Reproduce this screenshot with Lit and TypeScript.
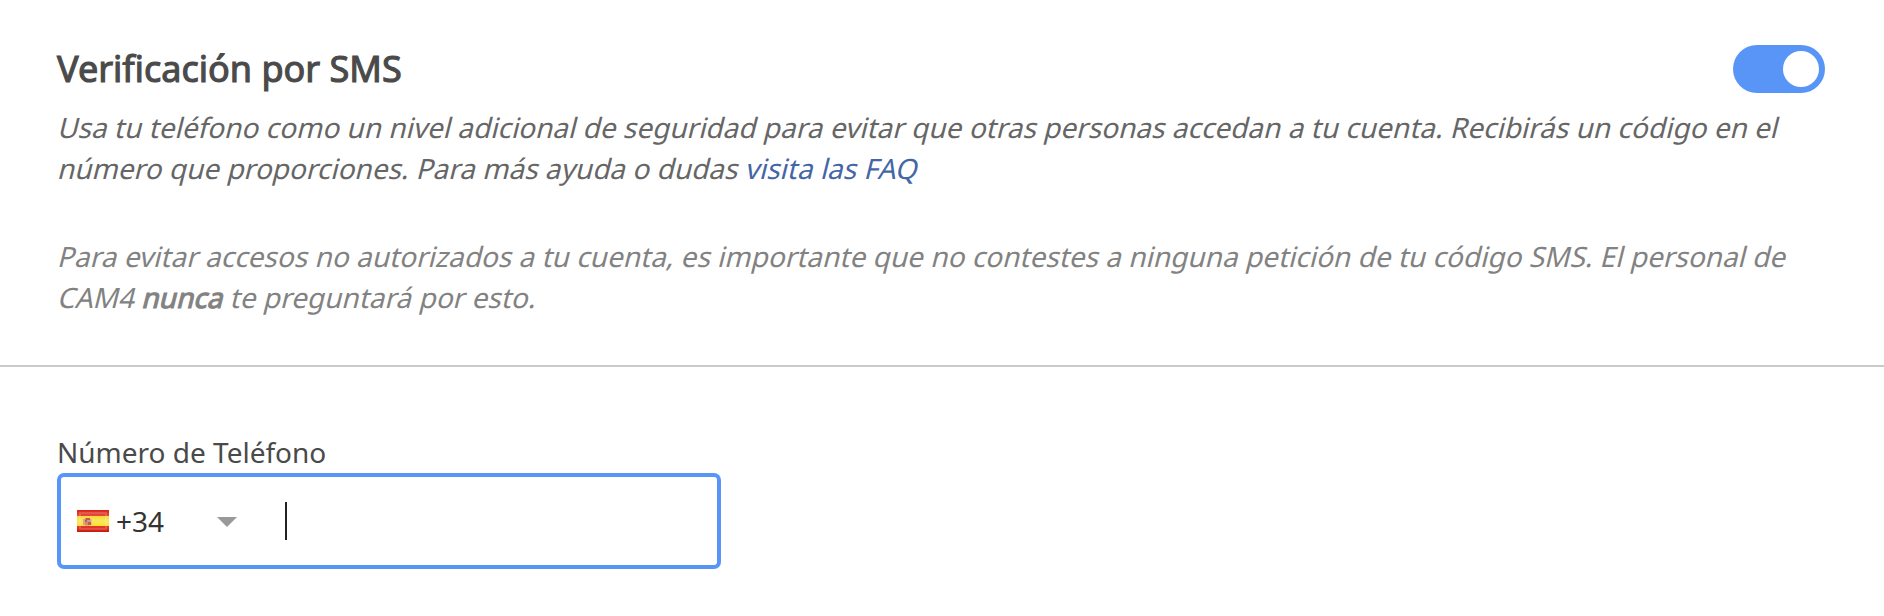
import { LitElement, html, css } from "lit";
import { customElement } from "lit/decorators.js";

@customElement("app-root")
export class AppRoot extends LitElement {
  static styles = css`
    :host { display: block; width: 1884px; height: 616px; background: #fff; overflow: hidden; font-family: "Noto Sans", sans-serif; color: #4a4a4a; }
    * { box-sizing: border-box; }
    .intro { height: 367px; padding: 45px 59px 0 57px; border-bottom: 2px solid #cacaca; }
    .head { display: flex; justify-content: space-between; height: 48px; }
    h1 { margin: -1px 0 0; font-size: 36px; line-height: 49px; font-weight: 400; -webkit-text-stroke: 1.1px #4a4a4a; white-space: nowrap; }
    .toggle { width: 92px; height: 48px; border-radius: 24px; background: #5995f7; display: flex; justify-content: flex-end; align-items: center; padding-right: 6px; }
    .knob { width: 36px; height: 36px; border-radius: 50%; background: #fff; }
    p { margin: 0; font-size: 28px; line-height: 41px; white-space: nowrap; color: #666; }
    .lead { margin-top: 14px; }
    .note { margin-top: 47px; color: #828282; }
    .line { display: block; width: max-content; transform: skewX(-14deg); transform-origin: 0 30px; }
    .faq { color: #4466a6; }
    .strong { -webkit-text-stroke: 1.1px #828282; }
    .form { padding: 65px 57px 0; }
    .label { font-size: 28px; line-height: 40px; margin-bottom: 1px; }
    .field { width: 664px; height: 96px; border: 4px solid #5995f7; border-radius: 7px; display: flex; align-items: center; padding-left: 16px; }
    .flag { width: 32px; height: 22px; margin-right: 7px; }
    .code { font-size: 28px; width: 101px; color: #333; }
    .arrow { width: 20px; height: 10px; margin-top: 2px; }
    .caret { width: 2px; height: 38px; background: #222; margin-left: 48px; }
  `;
  render() {
    return html`
      <section class="intro">
        <div class="head"><h1>Verificación por SMS</h1><div class="toggle"><div class="knob"></div></div></div>
        <p class="lead"><span class="line">Usa tu teléfono como un nivel adicional de seguridad para evitar que otras personas accedan a tu cuenta. Recibirás un código en el</span><span class="line">número que proporciones. Para más ayuda o dudas <span class="faq">visita las FAQ</span></span></p>
        <p class="note"><span class="line">Para evitar accesos no autorizados a tu cuenta, es importante que no contestes a ninguna petición de tu código SMS. El personal de</span><span class="line">CAM4 <span class="strong">nunca</span> te preguntará por esto.</span></p>
      </section>
      <section class="form">
        <div class="label">Número de Teléfono</div>
        <div class="field">
          <svg class="flag" viewBox="0 0 32 22">
            <defs>
              <linearGradient id="r" x2="0" y2="1"><stop stop-color="#d92419"/><stop offset=".25" stop-color="#e5493c"/><stop offset=".8" stop-color="#df3527"/><stop offset="1" stop-color="#c9180e"/></linearGradient>
              <linearGradient id="y" x2="0" y2="1"><stop stop-color="#fbd637"/><stop offset=".5" stop-color="#fae75c"/><stop offset="1" stop-color="#f8e22f"/></linearGradient>
            </defs>
            <path fill="url(#r)" d="M0 0h32v22H0z"/>
            <path fill="url(#y)" d="M0 6h32v10H0z"/>
            <path fill="none" stroke="#fff" stroke-opacity=".16" stroke-width="2" d="M3 3h26v16H3z"/>
            <path fill="#e3a08a" d="M6 9h2v6H6zM13 9h1.500v6H13z"/>
            <path fill="#d98b72" d="M8 8h5v7.500H8z"/>
            <path fill="#c45a50" d="M9 8h4v2H9zM8 10h2v2H8zM11 12h3v3h-3z"/>
            <path fill="#b7a2a6" d="M10 10h3v2h-3z"/>
          </svg>
          <span class="code">+34</span>
          <svg class="arrow" viewBox="0 0 20 10"><path fill="#999" d="M0 0h20L10 10z"/></svg>
          <span class="caret"></span>
        </div>
      </section>`;
  }
}
